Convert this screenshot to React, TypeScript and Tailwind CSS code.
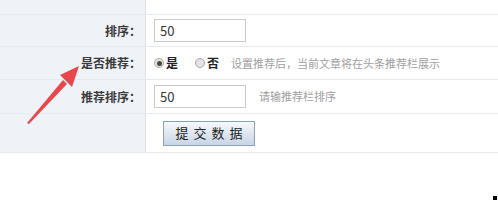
import React from 'react';

const font = { fontFamily: '"Noto Sans CJK SC", "Liberation Sans", sans-serif' };

const Radio = ({ checked, label }: { checked?: boolean; label: string }) => (
  <label className="flex items-center gap-[2px]">
    <span className="w-[10px] h-[10px] rounded-full border border-[#a8a8a8] bg-[#e4e4e4] flex items-center justify-center">
      {checked && <span className="w-[5px] h-[5px] rounded-full bg-[#444]" />}
    </span>
    <span className="text-[12px] font-bold text-[#222]">{label}</span>
  </label>
);

const Row = ({ label, h, children }: { label: string; h: string; children?: React.ReactNode }) => (
  <div className={`grid grid-cols-[146px_1fr] border-b border-[#e7ebf0] ${h}`}>
    <div className="bg-[#eff3f8] border-r border-[#dde3ea] flex items-center justify-end pr-[4px] text-[12px] font-bold text-[#3a3a3a]">
      {label}
    </div>
    <div className="flex items-center pl-[8px]">{children}</div>
  </div>
);

export default function App() {
  return (
    <div className="relative w-[498px] h-[209px] bg-white overflow-hidden" style={font}>
      <Row label="" h="h-[15px]" />
      <Row label="排序：" h="h-[32px]">
        <input
          defaultValue="50"
          className="w-[92px] h-[23px] border border-[#c9c9c9] px-[5px] text-[13px] text-[#333] outline-none"
        />
      </Row>
      <Row label="是否推荐：" h="h-[33px]">
        <div className="flex items-center gap-[17px]">
          <Radio checked label="是" />
          <Radio label="否" />
        </div>
        <span className="ml-[12px] text-[11px] text-[#a0a0a0]">设置推荐后，当前文章将在头条推荐栏展示</span>
      </Row>
      <Row label="推荐排序：" h="h-[34px]">
        <input
          defaultValue="50"
          className="w-[92px] h-[23px] border border-[#c9c9c9] px-[5px] text-[13px] text-[#333] outline-none"
        />
        <span className="ml-[13px] text-[11px] text-[#a0a0a0]">请输推荐栏排序</span>
      </Row>
      <Row label="" h="h-[39px]">
        <button className="ml-[9px] w-[92px] h-[25px] border border-[#8ba0ba] bg-gradient-to-b from-[#f6f8fb] to-[#c8d5e5] text-[13px] text-[#222] tracking-[5px] pl-[5px]">
          提交数据
        </button>
      </Row>

      {/* red arrow pointing to the label */}
      <svg className="absolute left-0 top-0" width="120" height="140" viewBox="0 0 120 140">
        <polygon points="27,123 63,80 67,84 29,124" fill="#e8474b" />
        <polygon points="79,66 60,75 72,87" fill="#e8474b" />
      </svg>

      <span className="absolute left-[493px] top-[196px] w-[4px] h-[4px] bg-black" />
    </div>
  );
}
